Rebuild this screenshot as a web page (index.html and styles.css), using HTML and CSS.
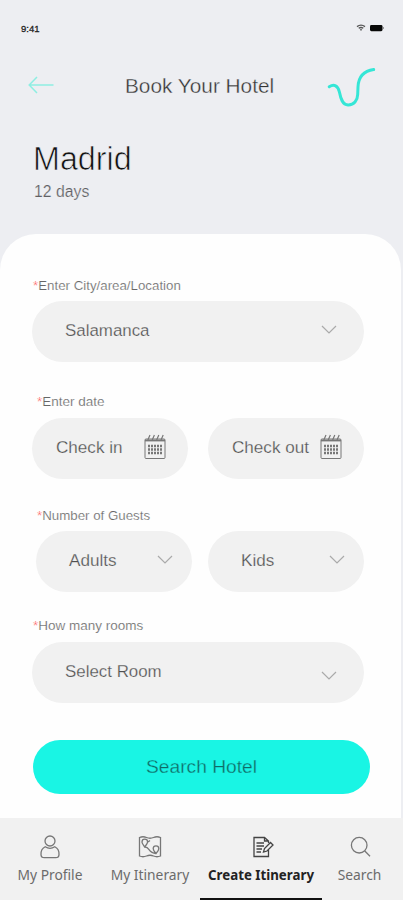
FILE: index.html
```
<!DOCTYPE html>
<html lang="en">
<head>
<meta charset="utf-8">
<title>Book Your Hotel</title>
<link rel="stylesheet" href="styles.css">
</head>
<body>
<div class="app">
  <div class="status">
    <span>9:41</span>
    <svg width="28" height="10" viewBox="0 0 28 10">
      <path d="M1 3.6Q5 .6 9 3.6M2.7 5.3Q5 3.6 7.3 5.3" fill="none" stroke="#555" stroke-width="1.4"/>
      <path d="M3.8 6.2h2.4L5 8z" fill="#444"/>
      <rect x="14" y="2" width="12.5" height="6.2" rx="1.4" fill="#080808"/>
      <path d="M27.3 4v2" stroke="#777" stroke-width=".9"/>
    </svg>
  </div>
  <header class="header">
    <svg class="back" width="26" height="18" viewBox="0 0 26 18" fill="none" stroke="#8eeee2" stroke-width="1.5"><path d="M25.5 9H1.5M9 1L1.2 9L9 17"/></svg>
    <h1>Book Your Hotel</h1>
    <svg class="logo" width="50" height="42" viewBox="0 0 50 42" fill="none" stroke="#35e6d6" stroke-width="3" stroke-linecap="round"><path d="M2.2 19.8C7 16.8 11 18.5 12.4 25C13.8 32 15.5 37.8 21 38C27 38.2 30.5 33.5 30.7 27.5L31 20C31.5 9.5 36.5 4 46.7 2.6"/></svg>
  </header>
  <section class="trip">
    <h2>Madrid</h2>
    <p>12 days</p>
  </section>
  <main class="card">
    <label class="label first"><i>*</i>Enter City/area/Location</label>
    <div class="field wide"><span>Salamanca</span><svg class="chev" viewBox="0 0 16 9"><path d="M1 1l7 7l7-7"/></svg></div>
    <label class="label date inset"><i>*</i>Enter date</label>
    <div class="row">
      <div class="field day"><span>Check in</span><svg class="cal" viewBox="0 0 24 26"><use href="#calendar"/></svg></div>
      <div class="field day"><span>Check out</span><svg class="cal" viewBox="0 0 24 26"><use href="#calendar"/></svg></div>
    </div>
    <label class="label guests inset"><i>*</i>Number of Guests</label>
    <div class="row people">
      <div class="field"><span>Adults</span><svg class="chev" viewBox="0 0 16 9"><path d="M1 1l7 7l7-7"/></svg></div>
      <div class="field"><span>Kids</span><svg class="chev" viewBox="0 0 16 9"><path d="M1 1l7 7l7-7"/></svg></div>
    </div>
    <label class="label rooms"><i>*</i>How many rooms</label>
    <div class="field wide low"><span>Select Room</span><svg class="chev" viewBox="0 0 16 9"><path d="M1 1l7 7l7-7"/></svg></div>
    <button class="search">Search Hotel</button>
  </main>
  <nav class="nav">
    <a class="profile"><svg width="24" height="26" viewBox="0 0 24 26"><circle cx="12" cy="7" r="5"/><path d="M7.2 12.8C4 14.5 2.8 17 3 20.5Q3 23.7 6.3 23.7H17.7Q21 23.7 21 20.5C21.2 17 20 14.5 16.8 12.8Q12 15.8 7.2 12.8Z"/></svg><span>My Profile</span></a>
    <a class="itinerary"><svg width="24" height="26" viewBox="0 0 24 26"><path d="M1.5 3.5Q5 2 8.5 3.5T15.5 3.5T22.5 3.5V22Q19 23.5 15.5 22T8.5 22T1.5 22Z"/><path d="M6.7 13C4.5 10 4 9.3 4 8a2.8 2.8 0 0 1 5.6 0C9.6 9.3 9 10 6.7 13ZM18 19.5C15.8 17 15.2 16 15.2 14.7a2.8 2.8 0 0 1 5.6 0C20.8 16 20.2 17 18 19.5ZM7 13C12 13 10 19 18 19.5M10 8L12 6.5"/></svg><span>My Itinerary</span></a>
    <a class="create"><svg width="24" height="26" viewBox="0 0 24 26"><path d="M17.5 9V7L13.5 3.5H3V22.5H17.5V16M13.5 3.5V7H17.5M5.5 9H13M5.5 12H13M5.5 15H11M5.5 18H10M12.5 18L13.5 14.5L19.5 8.5L22 11L16 17Z"/></svg><span>Create Itinerary</span></a>
    <a class="find"><svg width="24" height="26" viewBox="0 0 24 26"><circle cx="11.2" cy="11.2" r="7.8"/><path d="M16.8 17L22 22.2"/></svg><span>Search</span></a>
  </nav>
</div>
<svg class="defs" width="0" height="0"><defs><g id="calendar" fill="none" stroke="#777"><rect x="2" y="5" width="20" height="19.5" rx="1"/><path d="M2 6.5H22" stroke-width="1.8"/><path d="M4.8 6L7 1M9.2 6L11.4 1M13.6 6L15.8 1M18 6L20.2 1" stroke-width="1.2"/><path d="M5 12H19M5 15.5H19M5 19H19" stroke-width="2.4" stroke-dasharray="2 1"/></g></defs></svg>
</body>
</html>
```
FILE: styles.css
```
* { box-sizing: border-box; }
body { margin: 0; background: #edeef2; font-family: "Liberation Sans", Arial, sans-serif; color: #555; }
h1, h2, p { margin: 0; font-weight: 400; }
svg { display: block; flex: none; }
.defs { position: absolute; }
.app { width: 403px; height: 900px; overflow: hidden; display: flex; flex-direction: column; }
.status { height: 56px; padding: 0 19px 0 21px; display: flex; align-items: center; justify-content: space-between; font-size: 9.5px; color: #222; -webkit-text-stroke: .3px #222; }
.header { height: 60px; padding: 0 26px 0 28px; display: flex; align-items: center; }
.header h1 { margin-left: 71px; margin-top: -1px; font-size: 20.8px; line-height: 30px; width: 160px; white-space: nowrap; color: #333; -webkit-text-stroke: .35px #edeef2; }
.logo { margin-left: auto; margin-top: 3px; }
.back { margin-top: -3px; }
.trip { height: 118px; padding: 24px 33px 0; }
.trip h2 { font-size: 32.3px; line-height: 38px; color: #111; -webkit-text-stroke: .7px #edeef2; }
.trip p { margin-top: 4px; padding-left: 1px; font-size: 15.8px; line-height: 20px; color: #606064; -webkit-text-stroke: .2px #edeef2; }
.card { width: 401px; height: 584px; padding: 43px 32px 0; background: #fefefe; border-radius: 36px 36px 0 0; display: flex; flex-direction: column; }
.label { display: block; height: 18px; line-height: 18px; padding-left: 1px; font-size: 13.3px; color: #666; white-space: nowrap; -webkit-text-stroke: .2px #fefefe; }
.label i { color: #f55; font-style: normal; }
.label.inset { padding-left: 5px; }
.first { margin-bottom: 6px; }
.date { margin-top: 31px; margin-bottom: 7px; font-size: 13.5px; }
.guests { margin-top: 28px; margin-bottom: 6px; }
.rooms { margin-top: 25px; margin-bottom: 7px; font-size: 13.5px; }
.field { height: 61px; width: 156px; padding: 0 19px 0 33px; background: #f1f1f1; border-radius: 31px; display: flex; align-items: center; justify-content: space-between; font-size: 17.1px; line-height: 22px; color: #505050; white-space: nowrap; -webkit-text-stroke: .25px #f1f1f1; }
.field span { margin-top: -2px; }
.wide { width: 332px; padding-right: 27px; font-size: 16.9px; }
.row { width: 332px; display: flex; justify-content: space-between; }
.people { padding-left: 4px; }
.day { padding: 0 21px 0 24px; }
.chev { width: 16px; height: 9px; margin-top: -4px; fill: none; stroke: #aaa; stroke-width: 1.2; }
.low .chev { margin-top: 6px; }
.cal { width: 24px; height: 26px; margin-top: -4px; }
.search { width: 337px; height: 54px; margin: 37px 0 0 1px; padding: 0; border: 0; border-radius: 27px; background: #19f5e4; font: 19.2px/54px "Liberation Sans", Arial, sans-serif; color: #106a65; -webkit-text-stroke: .3px #19f5e4; }
.nav { height: 82px; background: #f1f1f1; display: flex; font: 13.8px/20px "Noto Sans", sans-serif; color: #6b6b6b; }
.nav a { display: flex; flex-direction: column; align-items: center; padding-top: 16px; white-space: nowrap; }
.nav svg { fill: none; stroke: #777; stroke-width: 1.3; }
.nav span { margin-top: 5px; }
.profile { width: 100px; }
.itinerary { width: 100px; }
.create { width: 122px; border-bottom: 2px solid #111; color: #222; font-weight: 700; font-size: 13.3px; }
.nav .create svg { stroke: #444; margin-left: 4px; }
.find { width: 75px; }
```
